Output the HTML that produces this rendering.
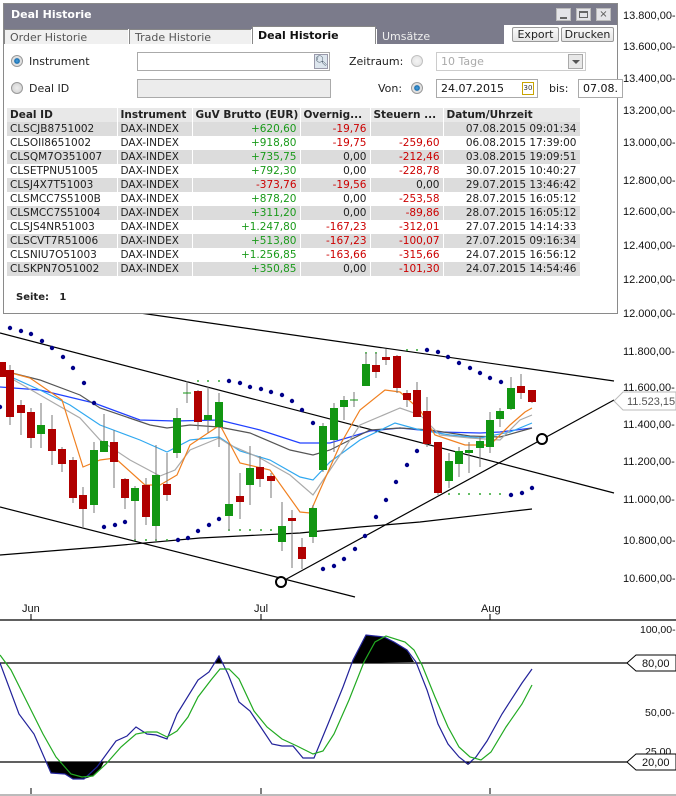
<!DOCTYPE html>
<html><head><meta charset="utf-8">
<style>
*{margin:0;padding:0;box-sizing:border-box}
body{width:676px;height:796px;overflow:hidden;background:#fff;position:relative;font-family:"DejaVu Sans",Verdana,sans-serif;font-size:11px;color:#222}
svg{position:absolute;left:0;top:0}
.dlg{position:absolute;left:3px;top:3px;width:615px;height:311px;background:#fff;border:1px solid #8a8a8a}
.title{position:absolute;left:0;top:0;width:613px;height:21px;background:#7b7b8b;color:#fff;font-weight:bold;font-size:11px;line-height:21px;padding-left:7px}
.wb{position:absolute;top:4px;width:15px;height:13px;background:#e4e4e8;border:1px solid #bbb}
.tabs{position:absolute;left:0;top:21px;width:613px;height:19px;background:#fff}
.tab{position:absolute;top:4px;height:15px;line-height:15px;padding-left:5px;font-size:11px;color:#555;background:#fff;border-left:1px solid #888;border-top:1px solid #888}
.btn{position:absolute;top:2px;height:15px;line-height:13px;border:1px solid #999;border-radius:2px;background:linear-gradient(#fafafa,#e4e4e4);font-size:11px;text-align:center;color:#222}
.radio{position:absolute;width:12px;height:12px;border-radius:50%;border:1px solid #999;background:radial-gradient(circle,#eee,#ccc)}
.radio.on{background:radial-gradient(circle,#4aa3e0 0,#1a6fb0 35%,#ddd 45%,#eee 100%)}
.inp{position:absolute;height:19px;border:1px solid #aaa;background:#fff;font-size:11px;line-height:17px;padding-left:4px}
.lbl{position:absolute;font-size:11px}
table{position:absolute;left:3px;top:104px;border-collapse:collapse;font-size:10.5px;table-layout:fixed;width:573px}
td,th{height:14px;line-height:14px;padding:0 3px;white-space:nowrap;overflow:hidden;border-right:1px solid #fff}
th{text-align:left;background:#e8e8e8;font-weight:bold}
tr.g td{background:#dcdcdc}
.r{text-align:right}.gr{color:#1a9a1a}.rd{color:#c00}
.ax{font-family:"Liberation Sans",Arial,sans-serif;font-size:11px;fill:#111}
</style></head><body>
<svg width="676" height="796" viewBox="0 0 676 796">
<g class="ax">
<text x="623" y="19">13.800,00-</text><text x="623" y="50">13.600,00-</text><text x="623" y="82">13.400,00-</text><text x="623" y="114">13.200,00-</text><text x="623" y="146">13.000,00-</text><text x="623" y="184">12.800,00-</text><text x="623" y="215">12.600,00-</text><text x="623" y="249">12.400,00-</text><text x="623" y="283">12.200,00-</text><text x="623" y="317">12.000,00-</text><text x="623" y="355">11.800,00-</text><text x="623" y="391">11.600,00-</text><text x="623" y="428">11.400,00-</text><text x="623" y="465">11.200,00-</text><text x="623" y="503">11.000,00-</text><text x="623" y="544">10.800,00-</text><text x="623" y="582">10.600,00-</text>
</g>
<g stroke="#000" stroke-width="1.2" fill="none">
<line x1="140" y1="313" x2="614" y2="381"/>
<line x1="0" y1="333" x2="614" y2="493"/>
<line x1="0" y1="507" x2="355" y2="597"/>
<line x1="281" y1="582" x2="614" y2="400"/>
<polyline points="0,555 100,547 200,538 300,533 360,527 420,522 532,509"/>
</g>
<g fill="none" stroke-width="1.2">
<polyline stroke="#2040ff" points="0,387 40,390 94,403 140,420 175,421 219,420 260,430 300,443 330,443 370,431 400,428 440,432 480,433 500,432 532,428"/>
<polyline stroke="#555" points="0,370 40,380 80,395 100,408 150,425 167,428 190,425 219,427 250,433 290,450 313,455 330,450 370,430 400,428 430,430 470,436 500,437 532,428"/>
<polyline stroke="#30a8f0" points="0,372 40,390 70,405 100,425 140,440 167,452 190,440 219,437 240,451 270,460 300,477 313,480 330,462 360,440 395,423 420,430 450,435 480,438 510,432 532,423"/>
<polyline stroke="#aaa" points="0,372 40,395 80,418 100,440 130,460 160,476 175,470 190,450 219,438 230,445 260,458 290,475 313,495 330,470 360,425 400,408 420,415 440,435 470,438 500,440 520,420 532,415"/>
<polyline stroke="#f08020" points="0,370 30,378 62,400 83,467 100,460 115,458 145,485 160,485 177,475 190,445 220,425 240,463 270,470 300,512 310,513 320,490 340,445 360,410 385,390 400,392 420,410 435,435 465,445 490,445 510,425 525,412 532,408"/>
</g>
<g fill="#00008a">
<circle cx="10" cy="328" r="2.2"/><circle cx="21" cy="331" r="2.2"/><circle cx="31" cy="334" r="2.2"/><circle cx="42" cy="341" r="2.2"/><circle cx="52" cy="348" r="2.2"/><circle cx="63" cy="357" r="2.2"/><circle cx="73" cy="368" r="2.2"/><circle cx="84" cy="383" r="2.2"/><circle cx="94" cy="403" r="2.2"/><circle cx="0" cy="407" r="2.2"/>
<circle cx="104" cy="527" r="2.2"/><circle cx="115" cy="525" r="2.2"/><circle cx="125" cy="522" r="2.2"/>
<circle cx="178" cy="540" r="2.2"/><circle cx="188" cy="538" r="2.2"/><circle cx="198" cy="531" r="2.2"/><circle cx="209" cy="525" r="2.2"/><circle cx="219" cy="519" r="2.2"/>
<circle cx="229" cy="381" r="2.2"/><circle cx="240" cy="383" r="2.2"/><circle cx="250" cy="387" r="2.2"/><circle cx="261" cy="389" r="2.2"/><circle cx="271" cy="392" r="2.2"/><circle cx="282" cy="395" r="2.2"/><circle cx="292" cy="401" r="2.2"/><circle cx="302" cy="410" r="2.2"/><circle cx="313" cy="423" r="2.2"/>
<circle cx="323" cy="569" r="2.2"/><circle cx="334" cy="566" r="2.2"/><circle cx="344" cy="559" r="2.2"/><circle cx="355" cy="549" r="2.2"/><circle cx="365" cy="536" r="2.2"/><circle cx="376" cy="517" r="2.2"/><circle cx="386" cy="500" r="2.2"/><circle cx="396" cy="482" r="2.2"/><circle cx="407" cy="465" r="2.2"/><circle cx="417" cy="451" r="2.2"/>
<circle cx="427" cy="350" r="2.2"/><circle cx="438" cy="352" r="2.2"/><circle cx="448" cy="357" r="2.2"/><circle cx="459" cy="363" r="2.2"/><circle cx="470" cy="368" r="2.2"/><circle cx="480" cy="373" r="2.2"/><circle cx="490" cy="378" r="2.2"/><circle cx="501" cy="382" r="2.2"/>
<circle cx="511" cy="495" r="2.2"/><circle cx="522" cy="493" r="2.2"/><circle cx="532" cy="488" r="2.2"/>
</g>
<g fill="#3a3">
<circle cx="198" cy="381" r="1"/><circle cx="208" cy="381" r="1"/><circle cx="219" cy="381" r="1"/>
<circle cx="229" cy="530" r="1"/><circle cx="240" cy="530" r="1"/><circle cx="250" cy="530" r="1"/><circle cx="261" cy="530" r="1"/><circle cx="271" cy="530" r="1"/><circle cx="282" cy="530" r="1"/>
<circle cx="135" cy="540" r="1"/><circle cx="146" cy="540" r="1"/><circle cx="156" cy="540" r="1"/><circle cx="167" cy="540" r="1"/>
<circle cx="449" cy="494" r="1"/><circle cx="459" cy="494" r="1"/><circle cx="469" cy="494" r="1"/><circle cx="480" cy="494" r="1"/><circle cx="490" cy="494" r="1"/><circle cx="500" cy="494" r="1"/>
<circle cx="407" cy="350" r="1"/><circle cx="417" cy="350" r="1"/><circle cx="366" cy="353" r="1"/><circle cx="376" cy="353" r="1"/>
</g>
<circle cx="281" cy="582" r="5" fill="#fff" stroke="#000" stroke-width="2"/>
<circle cx="542" cy="439" r="5" fill="#fff" stroke="#000" stroke-width="2"/>
<polygon points="614,401 623,392 676,392 676,410 623,410" fill="#fff" stroke="#bbb"/>
<text class="ax" x="627" y="405" style="fill:#555">11.523,15</text>
<g class="ax"><text x="22" y="612">Jun</text><text x="254" y="612">Jul</text><text x="481" y="612">Aug</text></g>
<line x1="0" y1="620" x2="676" y2="620" stroke="#000" stroke-width="1.2"/>
<g stroke="#000"><line x1="31" y1="614" x2="31" y2="620"/><line x1="261" y1="614" x2="261" y2="620"/><line x1="490" y1="614" x2="490" y2="620"/>
<line x1="31" y1="788" x2="31" y2="794"/><line x1="261" y1="788" x2="261" y2="794"/><line x1="490" y1="788" x2="490" y2="794"/></g>
<line x1="0" y1="795" x2="676" y2="795" stroke="#777"/>
<g class="ax" style="font-size:10.5px"><text x="640" y="633">100,00-</text><text x="645" y="716">50,00-</text><text x="645" y="755">25,00</text></g>
<g fill="#000">
<polygon points="47,762 51,773 65,774 73,779 84,779 93,776 100,770 104,762"/>
<polygon points="352,663 366,635 384,637 394,642 407,650 414,662"/>
<polygon points="215,663 219,655 223,663"/>
<polygon points="464,762 468,765 472,762"/>
</g>
<line x1="0" y1="663" x2="630" y2="663" stroke="#000" stroke-width="1.2"/>
<line x1="0" y1="762" x2="630" y2="762" stroke="#000" stroke-width="1.2"/>
<polygon points="627,663 636,655 676,655 676,671 636,671" fill="#fff" stroke="#000"/>
<polygon points="627,762 636,754 676,754 676,770 636,770" fill="#fff" stroke="#000"/>
<g class="ax"><text x="642" y="667">80,00</text><text x="642" y="766">20,00</text></g>
<polyline fill="none" stroke="#22229a" stroke-width="1.2" points="0,663 19,714 34,734 51,773 65,774 73,779 84,779 97,767 116,741 127,736 136,727 147,734 156,735 167,739 177,714 198,680 209,672 219,656 228,674 239,702 250,711 272,744 282,746 293,746 303,758 314,758 328,724 343,687 353,660 366,635 384,637 394,642 407,650 416,662 427,690 438,724 448,744 459,757 468,764 476,757 487,741 502,714 522,683 532,669"/>
<polyline fill="none" stroke="#22aa22" stroke-width="1.2" points="0,655 11,670 26,700 43,734 56,757 71,774 82,777 93,776 106,764 121,747 136,734 147,732 157,732 167,737 177,731 188,717 198,697 211,680 220,669 229,669 239,679 254,711 267,727 282,739 297,746 313,754 323,751 334,734 349,700 364,662 375,642 386,636 405,642 414,650 422,665 435,697 448,727 459,747 470,757 481,760 491,752 506,727 522,704 532,685"/>
</svg>

<div class="dlg">
 <div class="title">Deal Historie
  <div class="wb" style="left:552px"><div style="position:absolute;left:3px;top:8px;width:7px;height:2px;background:#666"></div></div>
  <div class="wb" style="left:572px"><div style="position:absolute;left:2px;top:2px;width:9px;height:7px;border:1px solid #666;border-top-width:2px"></div></div>
  <div class="wb" style="left:592px;color:#555;font-size:10px;line-height:11px;text-align:center;font-weight:normal">×</div>
 </div>
 <div class="tabs">
  <div style="position:absolute;left:0;top:0;width:500px;height:4px;background:#7b7b8b"></div>
  <div class="tab" style="left:0;width:124px;background:#f0f0f0">Order Historie</div>
  <div class="tab" style="left:125px;width:122px;background:#f0f0f0">Trade Historie</div>
  <div class="tab" style="left:248px;width:124px;top:1px;height:18px;line-height:17px;color:#111;font-weight:bold;border-right:1px solid #888">Deal Historie</div>
  <div class="tab" style="left:373px;width:127px;background:#7b7b8b;color:#eee;border:none">Umsätze</div>
  <div class="btn" style="left:508px;width:47px">Export</div>
  <div class="btn" style="left:557px;width:53px">Drucken</div>
 </div>
 <div class="radio on" style="left:7px;top:51px"></div><div class="lbl" style="left:25px;top:51px">Instrument</div>
 <div class="inp" style="left:133px;top:48px;width:193px"></div>
 <div style="position:absolute;left:310px;top:50px;width:14px;height:15px;background:#dde6ee;border:1px solid #99a;font-size:10px;line-height:13px;text-align:center;color:#345">&#x1F50D;&#xFE0E;</div>
 <div class="radio" style="left:7px;top:78px"></div><div class="lbl" style="left:25px;top:78px">Deal ID</div>
 <div class="inp" style="left:133px;top:75px;width:194px;background:#ececec"></div>
 <div class="lbl" style="left:345px;top:51px">Zeitraum:</div><div class="radio" style="left:407px;top:51px;opacity:.6"></div>
 <div class="inp" style="left:432px;top:48px;width:150px;color:#aaa;border-color:#ccc">10 Tage</div>
 <div style="position:absolute;left:564px;top:50px;width:15px;height:15px;background:#e8e8e8;border:1px solid #aaa"><div style="margin:5px 0 0 3px;width:0;height:0;border-left:4px solid transparent;border-right:4px solid transparent;border-top:4px solid #555"></div></div>
 <div class="lbl" style="left:374px;top:78px">Von:</div><div class="radio on" style="left:407px;top:78px"></div>
 <div class="inp" style="left:432px;top:75px;width:102px;color:#111">24.07.2015</div>
 <div style="position:absolute;left:518px;top:78px;width:12px;height:13px;border:1px solid #c9a400;background:#fff;font-size:7px;line-height:11px;text-align:center;color:#333">30</div>
 <div class="lbl" style="left:545px;top:78px">bis:</div>
 <div class="inp" style="left:574px;top:75px;width:45px;color:#111">07.08.</div>
 <table>
  <colgroup><col style="width:110px"><col style="width:75px"><col style="width:108px"><col style="width:70px"><col style="width:73px"><col style="width:137px"></colgroup>
  <tr><th>Deal ID</th><th>Instrument</th><th>GuV Brutto (EUR)</th><th>Overnig...</th><th>Steuern ...</th><th>Datum/Uhrzeit</th></tr>
  <tr class="g"><td>CLSCJB8751002</td><td>DAX-INDEX</td><td class="r gr">+620,60</td><td class="r rd">-19,76</td><td class="r rd"></td><td class="r">07.08.2015 09:01:34</td></tr>
  <tr><td>CLSOII8651002</td><td>DAX-INDEX</td><td class="r gr">+918,80</td><td class="r rd">-19,75</td><td class="r rd">-259,60</td><td class="r">06.08.2015 17:39:00</td></tr>
  <tr class="g"><td>CLSQM7O351007</td><td>DAX-INDEX</td><td class="r gr">+735,75</td><td class="r">0,00</td><td class="r rd">-212,46</td><td class="r">03.08.2015 19:09:51</td></tr>
  <tr><td>CLSETPNU51005</td><td>DAX-INDEX</td><td class="r gr">+792,30</td><td class="r">0,00</td><td class="r rd">-228,78</td><td class="r">30.07.2015 10:40:27</td></tr>
  <tr class="g"><td>CLSJ4X7T51003</td><td>DAX-INDEX</td><td class="r rd">-373,76</td><td class="r rd">-19,56</td><td class="r">0,00</td><td class="r">29.07.2015 13:46:42</td></tr>
  <tr><td>CLSMCC7S5100B</td><td>DAX-INDEX</td><td class="r gr">+878,20</td><td class="r">0,00</td><td class="r rd">-253,58</td><td class="r">28.07.2015 16:05:12</td></tr>
  <tr class="g"><td>CLSMCC7S51004</td><td>DAX-INDEX</td><td class="r gr">+311,20</td><td class="r">0,00</td><td class="r rd">-89,86</td><td class="r">28.07.2015 16:05:12</td></tr>
  <tr><td>CLSJS4NR51003</td><td>DAX-INDEX</td><td class="r gr">+1.247,80</td><td class="r rd">-167,23</td><td class="r rd">-312,01</td><td class="r">27.07.2015 14:14:33</td></tr>
  <tr class="g"><td>CLSCVT7R51006</td><td>DAX-INDEX</td><td class="r gr">+513,80</td><td class="r rd">-167,23</td><td class="r rd">-100,07</td><td class="r">27.07.2015 09:16:34</td></tr>
  <tr><td>CLSNIU7O51003</td><td>DAX-INDEX</td><td class="r gr">+1.256,85</td><td class="r rd">-163,66</td><td class="r rd">-315,66</td><td class="r">24.07.2015 16:56:12</td></tr>
  <tr class="g"><td>CLSKPN7O51002</td><td>DAX-INDEX</td><td class="r gr">+350,85</td><td class="r">0,00</td><td class="r rd">-101,30</td><td class="r">24.07.2015 14:54:46</td></tr>
 </table>
 <div class="lbl" style="left:12px;top:288px;font-weight:bold;font-size:10px">Seite:&nbsp;&nbsp;&nbsp;1</div>
</div>

<svg width="676" height="796" viewBox="0 0 676 796" style="pointer-events:none">
<g stroke="#777" stroke-width="1">
<line x1="10" y1="365" x2="10" y2="425"/><line x1="21" y1="400" x2="21" y2="435"/><line x1="31" y1="408" x2="31" y2="448"/><line x1="41" y1="403" x2="41" y2="448"/><line x1="52" y1="415" x2="52" y2="465"/><line x1="62" y1="447" x2="62" y2="472"/><line x1="73" y1="457" x2="73" y2="503"/><line x1="83" y1="487" x2="83" y2="528"/><line x1="94" y1="442" x2="94" y2="513"/><line x1="104" y1="414" x2="104" y2="452"/><line x1="114" y1="430" x2="114" y2="488"/><line x1="125" y1="478" x2="125" y2="509"/><line x1="135" y1="486" x2="135" y2="540"/><line x1="146" y1="478" x2="146" y2="525"/><line x1="156" y1="445" x2="156" y2="540"/><line x1="167" y1="453" x2="167" y2="501"/><line x1="177" y1="408" x2="177" y2="458"/><line x1="187" y1="381" x2="187" y2="403"/><line x1="198" y1="390" x2="198" y2="430"/><line x1="208" y1="387" x2="208" y2="433"/><line x1="219" y1="393" x2="219" y2="447"/><line x1="229" y1="443" x2="229" y2="530"/><line x1="240" y1="473" x2="240" y2="519"/><line x1="250" y1="446" x2="250" y2="505"/><line x1="260" y1="456" x2="260" y2="487"/><line x1="271" y1="473" x2="271" y2="498"/><line x1="282" y1="502" x2="282" y2="551"/><line x1="292" y1="510" x2="292" y2="568"/><line x1="302" y1="538" x2="302" y2="569"/>
<line x1="313" y1="505" x2="313" y2="543"/><line x1="323" y1="423" x2="323" y2="472"/><line x1="334" y1="403" x2="334" y2="452"/><line x1="344" y1="396" x2="344" y2="420"/><line x1="354" y1="392" x2="354" y2="407"/><line x1="366" y1="353" x2="366" y2="386"/><line x1="376" y1="353" x2="376" y2="378"/><line x1="386" y1="349" x2="386" y2="365"/><line x1="397" y1="355" x2="397" y2="393"/><line x1="407" y1="390" x2="407" y2="407"/><line x1="417" y1="382" x2="417" y2="417"/><line x1="427" y1="397" x2="427" y2="447"/><line x1="438" y1="442" x2="438" y2="495"/><line x1="449" y1="453" x2="449" y2="488"/><line x1="459" y1="447" x2="459" y2="477"/><line x1="469" y1="442" x2="469" y2="473"/><line x1="480" y1="437" x2="480" y2="467"/><line x1="490" y1="412" x2="490" y2="453"/><line x1="500" y1="408" x2="500" y2="427"/><line x1="511" y1="377" x2="511" y2="410"/><line x1="521" y1="374" x2="521" y2="399"/><line x1="532" y1="390" x2="532" y2="403"/>
</g>
<g fill="#b00000">
<rect x="0" y="362" width="6" height="15"/><rect x="6" y="370" width="8" height="47"/><rect x="17" y="405" width="8" height="8"/><rect x="27" y="412" width="8" height="26"/><rect x="48" y="429" width="8" height="22"/><rect x="58" y="449" width="8" height="15"/><rect x="69" y="460" width="8" height="38"/><rect x="79" y="495" width="8" height="14"/><rect x="110" y="442" width="8" height="20"/><rect x="121" y="479" width="8" height="19"/><rect x="142" y="485" width="8" height="32"/><rect x="163" y="484" width="8" height="11"/><rect x="194" y="391" width="8" height="31"/><rect x="236" y="496" width="8" height="6"/><rect x="256" y="467" width="8" height="12"/><rect x="267" y="476" width="8" height="5"/><rect x="288" y="518" width="8" height="3"/><rect x="298" y="547" width="8" height="12"/>
<rect x="372" y="365" width="8" height="7"/><rect x="382" y="357" width="8" height="3"/><rect x="393" y="356" width="8" height="32"/><rect x="403" y="393" width="8" height="7"/><rect x="413" y="390" width="8" height="27"/><rect x="423" y="411" width="8" height="33"/><rect x="434" y="442" width="8" height="51"/><rect x="517" y="386" width="8" height="7"/><rect x="528" y="390" width="8" height="12"/>
</g>
<g fill="#129612">
<rect x="37" y="425" width="8" height="9"/><rect x="90" y="450" width="8" height="55"/><rect x="100" y="441" width="8" height="11"/><rect x="131" y="488" width="8" height="13"/><rect x="152" y="475" width="8" height="51"/><rect x="173" y="418" width="8" height="35"/><rect x="204" y="415" width="8" height="5"/><rect x="215" y="402" width="8" height="25"/><rect x="225" y="504" width="8" height="12"/><rect x="246" y="468" width="8" height="17"/><rect x="278" y="526" width="8" height="16"/>
<rect x="309" y="508" width="8" height="29"/><rect x="319" y="426" width="8" height="44"/><rect x="330" y="408" width="8" height="32"/><rect x="340" y="400" width="8" height="7"/><rect x="362" y="364" width="8" height="22"/><rect x="445" y="461" width="8" height="20"/><rect x="455" y="451" width="8" height="13"/><rect x="465" y="450" width="8" height="3"/><rect x="476" y="441" width="8" height="7"/><rect x="486" y="420" width="8" height="27"/><rect x="496" y="411" width="8" height="8"/><rect x="507" y="388" width="8" height="21"/>
</g>
<g stroke="#129612"><line x1="183" y1="393" x2="191" y2="393"/><line x1="350" y1="400" x2="358" y2="400"/></g>
</svg>
</body></html>
